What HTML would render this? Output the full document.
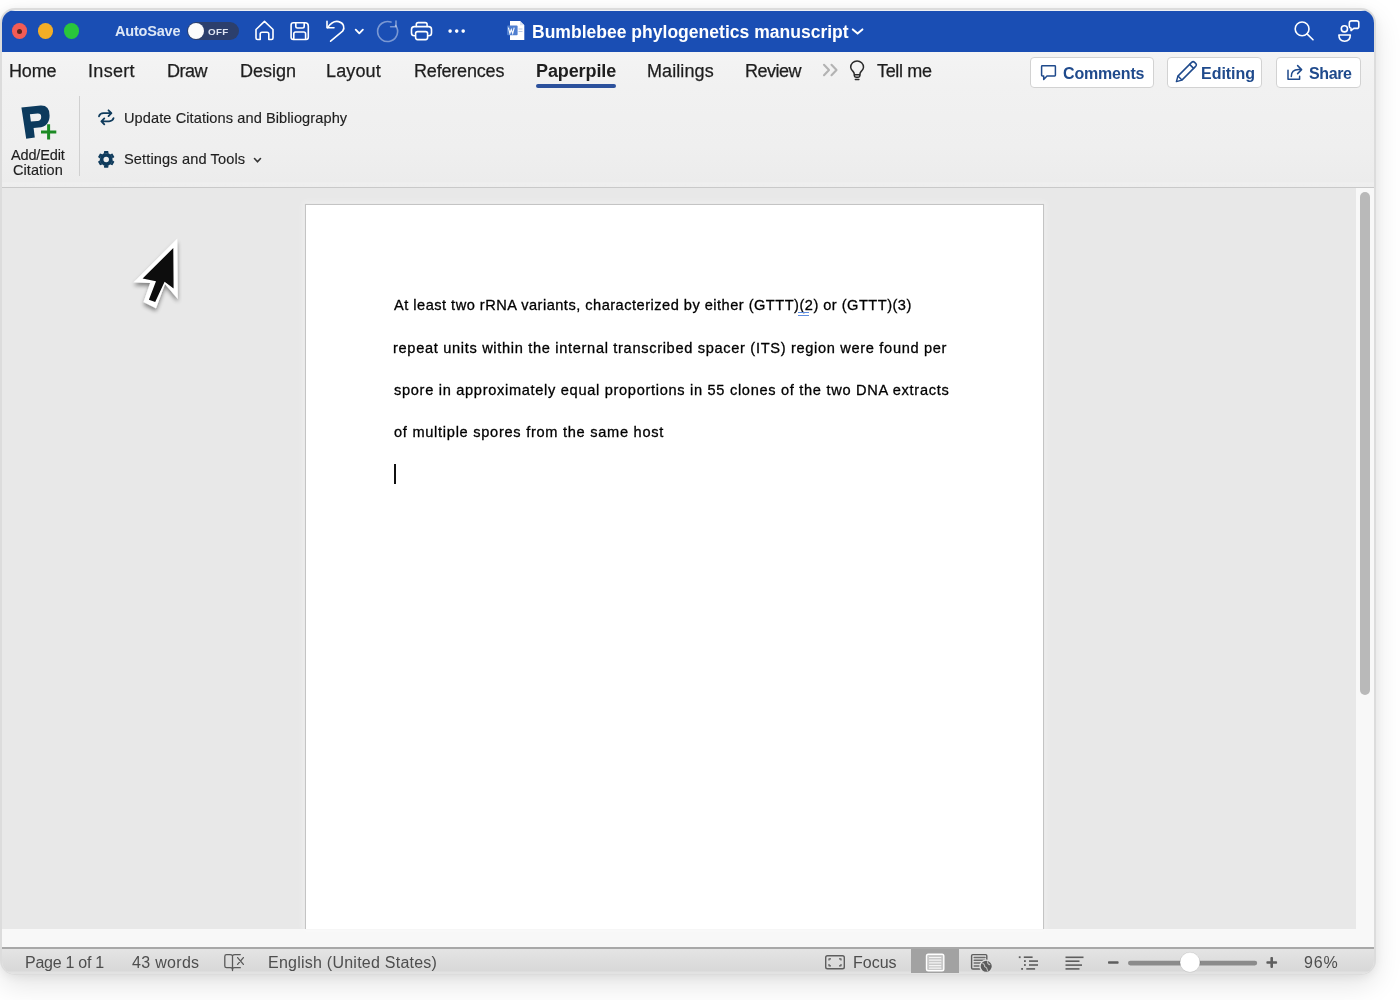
<!DOCTYPE html>
<html><head><meta charset="utf-8">
<style>
*{box-sizing:border-box;margin:0;padding:0}
html,body{width:1400px;height:1000px;overflow:hidden;background:#fff;font-family:"Liberation Sans",sans-serif}
.abs{position:absolute}
.t{position:absolute;white-space:nowrap;line-height:1;will-change:transform}
#frame{position:absolute;left:0;top:8px;width:1376px;height:967px;border-radius:15px;background:#dcdcdc;box-shadow:0 10px 28px rgba(0,0,0,.11),0 2px 10px rgba(0,0,0,.06)}
#win{position:absolute;left:2px;top:10px;width:1372px;height:964px;border-radius:13px;overflow:hidden;background:#f0f0f0}
#title{position:absolute;left:0;top:0;width:100%;height:42px;background:#1a4eb4;border-top:1px solid #eef0f4}
#ribbon{position:absolute;left:0;top:42px;width:100%;height:135px;background:linear-gradient(#f4f4f4,#f1f1f1 25%,#efefef 70%,#ececec 96%,#efefef 97%,#ededed)}
#docarea{position:absolute;left:0;top:177px;width:1354px;height:742px;background:#e8e8e8;border-top:1px solid #c9c9c9}
#vscroll{position:absolute;left:1354px;top:177px;width:18px;height:742px;background:#f8f8f8;border-top:1px solid #c9c9c9}
#hscroll{position:absolute;left:0;top:919px;width:100%;height:18px;background:#f8f8f8}
#status{position:absolute;left:0;top:937px;width:100%;height:27px;background:linear-gradient(#e4e4e4,#d8d8d8 88%,#e2e2e2 92%,#e2e2e2);border-top:2px solid #a8a8a8}
</style></head><body>
<div id="frame"></div>
<div id="win">
  <div id="title"></div>
  <div id="ribbon"></div>
  <div id="docarea"></div>
  <div id="vscroll"><div class="abs" style="left:4.2px;top:4px;width:9.8px;height:502.5px;border-radius:5px;background:#b9b9b9"></div></div>
  <div id="hscroll"></div>
  <div id="status"></div>
</div>
<div class="abs" style="left:11.75px;top:23.25px;width:15.5px;height:15.5px;border-radius:50%;background:#f35c55"></div>
<div class="abs" style="left:17px;top:28.5px;width:5px;height:5px;border-radius:50%;background:#5c261f"></div>
<div class="abs" style="left:37.75px;top:23.25px;width:15.5px;height:15.5px;border-radius:50%;background:#f4ae26"></div>
<div class="abs" style="left:63.75px;top:23.25px;width:15.5px;height:15.5px;border-radius:50%;background:#29c63b"></div>
<div class="abs" style="left:187px;top:22px;width:52px;height:18px;border-radius:9px;background:#2c3f6c"></div>
<div class="abs" style="left:187.5px;top:22.5px;width:16.5px;height:16.5px;border-radius:50%;background:#fbfbfb"></div>
<div class="t" id="t_26032449" style="left:114.50px;top:24.33px;font-size:14.5px;font-weight:bold;color:#dde7f6;letter-spacing:-0.204px;">AutoSave</div>
<div class="t" id="t_88506317" style="left:208.10px;top:27.10px;font-size:9.8px;font-weight:bold;color:#dfe6f3;letter-spacing:0.300px;">OFF</div>
<svg class="abs" style="left:0;top:0" width="1400" height="60" viewBox="0 0 1400 60" fill="none" stroke="#fff" stroke-width="1.6" stroke-linecap="round" stroke-linejoin="round">
  <path d="M256 29.5 L264.5 21.3 L273 29.5 V38 Q273 39.5 271.5 39.5 H268.8 V34 Q268.8 32.3 267 32.3 H262 Q260.2 32.3 260.2 34 V39.5 H257.5 Q256 39.5 256 38 Z"/>
  <path d="M293.5 22.8 H305 Q308.3 22.8 308.3 26 V37.3 Q308.3 39.5 306.1 39.5 H293.3 Q291.1 39.5 291.1 37.3 V25 Q291.1 22.8 293.5 22.8 Z"/>
  <path d="M295.8 23 V26.3 Q295.8 28 297.5 28 H302.5 Q304.2 28 304.2 26.3 V23"/>
  <path d="M293.8 39.3 V33.8 Q293.8 32 295.6 32 H303.8 Q305.6 32 305.6 33.8 V39.3"/>
  <path d="M327 21.2 V27.8 H334"/>
  <path d="M327.6 27.6 C 331 22.6 335 20.8 338.6 21.6 C 343.6 22.8 345.2 27.6 342.6 31.2 L330.6 41.2"/>
  <path d="M355.7 29.6 L359.3 33.4 L362.9 29.6" stroke-width="1.8"/>
  <g stroke="rgba(255,255,255,0.42)"><path d="M395.6 25.5 A 10 10 0 1 1 391 22.1"/><path d="M396 21 V26.8 H390.6"/></g>
  <path d="M416.3 26.5 V24.5 Q416.3 22.6 418.2 22.6 H425.2 Q427.1 22.6 427.1 24.5 V26.5"/>
  <path d="M415 35.8 H414.3 Q411.5 35.8 411.5 33 V29.5 Q411.5 26.6 414.4 26.6 H428.6 Q431.5 26.6 431.5 29.5 V33 Q431.5 35.8 428.7 35.8 H428"/>
  <rect x="415.6" y="31.6" width="12" height="8" rx="2" fill="#1a4eb4"/>
  <path d="M852.8 29.4 L857.6 33.6 L862.4 29.4" stroke-width="2"/>
  <circle cx="1302.1" cy="28.9" r="6.9"/>
  <path d="M1307 33.9 L1313 39.8"/>
  <circle cx="1344.4" cy="28.8" r="3.1"/>
  <path d="M1338.9 35 H1350.3 Q1350.3 41.2 1344.6 41.2 Q1338.9 41.2 1338.9 35 Z"/>
  <path d="M1351.5 20.9 H1356.8 Q1358.8 20.9 1358.8 22.9 V26.4 Q1358.8 28.4 1356.8 28.4 H1353.8 L1351 30.6 V28.2 Q1349.3 27.8 1349.3 26.2 V23.1 Q1349.3 20.9 1351.5 20.9 Z"/>
</svg>
<svg class="abs" style="left:0;top:0" width="1400" height="60" viewBox="0 0 1400 60">
  <circle cx="450.1" cy="31.1" r="1.8" fill="#fff"/><circle cx="456.7" cy="31.1" r="1.8" fill="#fff"/><circle cx="463.2" cy="31.1" r="1.8" fill="#fff"/>
  <path d="M510 21 H520 L524.3 25.3 V40 H510 Z" fill="#fff"/>
  <path d="M520 21 V25.3 H524.3" fill="#d9e2f2"/>
  <rect x="507" y="25.6" width="10.6" height="9.6" rx="1" fill="#4f7fd0"/>
  <path d="M508.4 27.6 L509.9 33.3 L511.3 29.5 L512.7 33.3 L514.2 27.6" stroke="#fff" stroke-width="1.1" fill="none"/>
  <rect x="518.5" y="28.5" width="4" height="1" fill="#b9c8e6"/><rect x="518.5" y="31" width="4" height="1" fill="#b9c8e6"/>
</svg>
<div class="t" id="t_17146103" style="left:531.50px;top:23.69px;font-size:17.5px;font-weight:bold;color:#fff;letter-spacing:0.018px;">Bumblebee phylogenetics manuscript</div>
<div class="t" id="t_84272688" style="left:8.70px;top:61.56px;font-size:18px;color:#1e1e1e;letter-spacing:-0.132px;-webkit-text-stroke:0.25px #1e1e1e;">Home</div>
<div class="t" id="t_49622823" style="left:87.80px;top:61.56px;font-size:18px;color:#1e1e1e;letter-spacing:0.320px;-webkit-text-stroke:0.25px #1e1e1e;">Insert</div>
<div class="t" id="t_42883505" style="left:167.10px;top:61.56px;font-size:18px;color:#1e1e1e;letter-spacing:-0.465px;-webkit-text-stroke:0.25px #1e1e1e;">Draw</div>
<div class="t" id="t_97843660" style="left:239.80px;top:61.56px;font-size:18px;color:#1e1e1e;-webkit-text-stroke:0.25px #1e1e1e;">Design</div>
<div class="t" id="t_3733406" style="left:326.30px;top:61.56px;font-size:18px;color:#1e1e1e;letter-spacing:0.120px;-webkit-text-stroke:0.25px #1e1e1e;">Layout</div>
<div class="t" id="t_72093144" style="left:413.80px;top:61.56px;font-size:18px;color:#1e1e1e;letter-spacing:-0.180px;-webkit-text-stroke:0.25px #1e1e1e;">References</div>
<div class="t" id="t_31691525" style="left:646.50px;top:61.56px;font-size:18px;color:#1e1e1e;letter-spacing:0.087px;-webkit-text-stroke:0.25px #1e1e1e;">Mailings</div>
<div class="t" id="t_41830489" style="left:745.00px;top:61.56px;font-size:18px;color:#1e1e1e;letter-spacing:-0.520px;-webkit-text-stroke:0.25px #1e1e1e;">Review</div>
<div class="t" id="t_50229853" style="left:876.80px;top:61.56px;font-size:18px;color:#1e1e1e;letter-spacing:-0.333px;-webkit-text-stroke:0.25px #1e1e1e;">Tell me</div>
<div class="t" id="t_70529403" style="left:536.10px;top:61.56px;font-size:18px;font-weight:bold;color:#1e1e1e;letter-spacing:-0.100px;">Paperpile</div>
<div class="abs" style="left:536px;top:84px;width:80px;height:4px;border-radius:2px;background:#2c519c"></div>
<svg class="abs" style="left:0;top:50px" width="1400" height="50" viewBox="0 50 1400 50" fill="none" stroke-linecap="round" stroke-linejoin="round">
  <path d="M824 64.8 L829 70 L824 75.2 M831.5 64.8 L836.5 70 L831.5 75.2" stroke="#b3b3b3" stroke-width="2.1"/>
  <path d="M854.3 75.6 V74.2 Q854.3 72.6 852.6 70.9 Q850.7 68.9 850.7 67.3 A6.4 6.4 0 0 1 863.5 67.3 Q863.5 68.9 861.6 70.9 Q859.9 72.6 859.9 74.2 V75.6 Q859.9 77.3 858.2 77.3 H856 Q854.3 77.3 854.3 75.6 Z" stroke="#2a2a2a" stroke-width="1.5"/>
  <path d="M854.5 74.8 H859.7 M855.3 79.5 H858.9" stroke="#2a2a2a" stroke-width="1.4"/>
</svg>
<div class="abs" style="left:1029.5px;top:57px;width:124.0px;height:31px;border-radius:4px;background:#fff;border:1px solid #d2d2d2"></div>
<div class="abs" style="left:1167px;top:57px;width:94.5px;height:31px;border-radius:4px;background:#fff;border:1px solid #d2d2d2"></div>
<div class="abs" style="left:1275.5px;top:57px;width:85.5px;height:31px;border-radius:4px;background:#fff;border:1px solid #d2d2d2"></div>
<div class="t" id="t_83634332" style="left:1063.20px;top:66.46px;font-size:16px;font-weight:bold;color:#1f4a8c;letter-spacing:-0.168px;">Comments</div>
<div class="t" id="t_40812265" style="left:1200.60px;top:66.46px;font-size:16px;font-weight:bold;color:#1f4a8c;letter-spacing:-0.031px;">Editing</div>
<div class="t" id="t_46464870" style="left:1309.20px;top:66.46px;font-size:16px;font-weight:bold;color:#1f4a8c;letter-spacing:-0.400px;">Share</div>
<svg class="abs" style="left:0;top:50px" width="1400" height="50" viewBox="0 50 1400 50" fill="none" stroke="#1f4a8c" stroke-width="1.5" stroke-linecap="round" stroke-linejoin="round">
  <path d="M1042.3 65.8 H1054.7 Q1055.4 65.8 1055.4 66.5 V75.3 Q1055.4 76 1054.7 76 H1047 L1043.7 79.5 V76 H1042.3 Q1041.6 76 1041.6 75.3 V66.5 Q1041.6 65.8 1042.3 65.8 Z"/>
  <path d="M1176.4 81.6 L1177.9 76.1 L1191.6 62.4 Q1193.1 60.9 1194.6 62.4 L1195.6 63.4 Q1197.1 64.9 1195.6 66.4 L1181.9 80.1 Z"/>
  <path d="M1178.2 76.3 L1181.7 79.8 M1189.6 64.4 L1193.6 68.4"/>
  <path d="M1288 70.3 V79.2 H1299.6 V76.2"/>
  <path d="M1291.3 76.6 Q1291.3 69.6 1298.6 69.6 H1301.4 M1297.6 65.6 L1301.6 69.6 L1297.6 73.6"/>
</svg>
<div class="t" id="t_71415620" style="left:11.00px;top:147.73px;font-size:14.5px;color:#1e1e1e;letter-spacing:-0.143px;-webkit-text-stroke:0.15px #1e1e1e;">Add/Edit</div>
<div class="t" id="t_64988780" style="left:13.00px;top:162.63px;font-size:14.5px;color:#1e1e1e;letter-spacing:0.084px;-webkit-text-stroke:0.15px #1e1e1e;">Citation</div>
<div class="abs" style="left:79px;top:96px;width:1px;height:80px;background:#d0d0d0"></div>
<div class="t" id="t_95820606" style="left:124.10px;top:111.14px;font-size:14.6px;color:#1e1e1e;letter-spacing:0.077px;-webkit-text-stroke:0.15px #1e1e1e;">Update Citations and Bibliography</div>
<div class="t" id="t_17718023" style="left:124.10px;top:152.44px;font-size:14.6px;color:#1e1e1e;letter-spacing:0.125px;-webkit-text-stroke:0.15px #1e1e1e;">Settings and Tools</div>
<svg class="abs" style="left:0;top:95px" width="400" height="95" viewBox="0 95 400 95">
  <path d="M21.4 107.4 L40.6 105.6 Q49.6 105.2 49.6 115.4 Q49.6 126.4 38.6 127.6 L33.6 128.1 L34.8 137.4 L26.2 138.8 Z M29.9 114.3 L37.6 113.6 Q41.2 113.4 41.2 116.9 Q41.2 120.6 37.4 120.9 L30.9 121.5 Z" fill="#0c3a5d" fill-rule="evenodd"/>
  <path d="M41 131.9 H56.3 M48.6 124.3 V139.6" stroke="#1c8a24" stroke-width="3"/>
  <g fill="none" stroke="#0f3b5c" stroke-width="1.8" stroke-linecap="round" stroke-linejoin="round">
    <path d="M99 116.3 Q100 113.2 103.5 113.2 H111.3 M108.5 110.3 L111.4 113.2 L108.5 116.1"/>
    <path d="M113.6 118.1 Q112.6 121.3 109.1 121.3 H101.4 M104.3 118.4 L101.4 121.3 L104.3 124.3"/>
    <path d="M254.5 158.5 L257.5 161.8 L260.5 158.5" stroke="#333" stroke-width="1.6"/>
  </g>
  <path d="M103.80 153.47 L104.20 151.10 L108.20 151.10 L108.60 153.47 A6.4 6.4 0 0 0 99.86 158.51 L98.01 156.98 L100.01 153.52 L102.26 154.36 A6.4 6.4 0 0 0 102.26 164.44 L100.01 165.28 L98.01 161.82 L99.86 160.29 A6.4 6.4 0 0 0 108.60 165.33 L108.20 167.70 L104.20 167.70 L103.80 165.33 A6.4 6.4 0 0 0 112.54 160.29 L114.39 161.82 L112.39 165.28 L110.14 164.44 A6.4 6.4 0 0 0 110.14 154.36 L112.39 153.52 L114.39 156.98 L112.54 158.51 A6.4 6.4 0 0 0 103.80 153.47 Z M106.2 156.7 A2.75 2.75 0 1 0 106.2 162.2 A2.75 2.75 0 1 0 106.2 156.7 Z" fill="#0f3b5c" fill-rule="evenodd"/>
</svg>
<div class="abs" style="left:305px;top:204px;width:739px;height:725px;background:#fff;border:1px solid #c4c4c4;border-bottom:none;box-shadow:0 0 1px rgba(0,0,0,.08),0 0 6px 2px rgba(255,255,255,.35)"></div>
<div class="t" id="t_59730513" style="left:394.30px;top:298.24px;font-size:14.6px;color:#000;letter-spacing:0.488px;-webkit-text-stroke:0.3px #000;">At least two rRNA variants, characterized by either (GTTT)(2) or (GTTT)(3)</div>
<div class="t" id="t_63305617" style="left:393.40px;top:340.84px;font-size:14.6px;color:#000;letter-spacing:0.679px;-webkit-text-stroke:0.3px #000;">repeat units within the internal transcribed spacer (ITS) region were found per</div>
<div class="t" id="t_8577217" style="left:394.30px;top:382.74px;font-size:14.6px;color:#000;letter-spacing:0.692px;-webkit-text-stroke:0.3px #000;">spore in approximately equal proportions in 55 clones of the two DNA extracts</div>
<div class="t" id="t_11297310" style="left:394.30px;top:425.34px;font-size:14.6px;color:#000;letter-spacing:0.722px;-webkit-text-stroke:0.3px #000;">of multiple spores from the same host</div>
<div class="abs" style="left:797.5px;top:312px;width:11.5px;height:3.5px;border-top:1.2px solid #5f8ee0;border-bottom:1.2px solid #5f8ee0"></div>
<div class="abs" style="left:394px;top:464px;width:1.6px;height:19.5px;background:#111"></div>
<svg class="abs" style="left:120px;top:225px" width="80" height="100" viewBox="120 225 80 100">
  <defs><filter id="sh" x="-50%" y="-50%" width="200%" height="200%"><feGaussianBlur in="SourceAlpha" stdDeviation="2.2"/><feOffset dx="0" dy="2.5"/><feComponentTransfer><feFuncA type="linear" slope="0.45"/></feComponentTransfer><feMerge><feMergeNode/><feMergeNode in="SourceGraphic"/></feMerge></filter></defs>
  <g filter="url(#sh)">
  <path d="M177.3 238.6 L177.8 298.9 L165 284 L156 308.3 L143.5 302 L150.2 283.1 L133.6 282.2 Z" fill="#fff"/>
  </g>
  <path d="M173.3 248 L173.6 288.5 L164.6 281.8 L155.2 302 L148.9 299.8 L156 281.3 L142.6 278.6 Z" fill="#0d0d0d"/>
</svg>
<div class="t" id="t_20716267" style="left:25.30px;top:955.46px;font-size:16px;color:#4e4e4e;letter-spacing:-0.270px;">Page 1 of 1</div>
<div class="t" id="t_37225579" style="left:131.80px;top:955.46px;font-size:16px;color:#4e4e4e;letter-spacing:0.311px;">43 words</div>
<div class="t" id="t_17611000" style="left:267.90px;top:955.46px;font-size:16px;color:#4e4e4e;letter-spacing:0.241px;">English (United States)</div>
<div class="t" id="t_59652253" style="left:852.70px;top:955.46px;font-size:16px;color:#4e4e4e;">Focus</div>
<div class="t" id="t_34278071" style="left:1304.10px;top:955.46px;font-size:16px;color:#4e4e4e;letter-spacing:0.900px;">96%</div>
<div class="abs" style="left:911px;top:948.5px;width:47.5px;height:24.5px;background:#a2a2a2"></div>
<svg class="abs" style="left:0;top:940px" width="1400" height="40" viewBox="0 940 1400 40" fill="none" stroke-linecap="round" stroke-linejoin="round">
  <g stroke="#5a5a5a" stroke-width="1.3">
    <path d="M232.5 955.6 Q231.7 954.6 230 954.6 H226.6 Q224.8 954.6 224.8 956.4 V965.9 Q224.8 967.7 226.6 967.7 H230.5 Q232.5 967.7 232.5 969.7 V970.6 M232.5 969.7 Q232.5 967.7 234.5 967.7 H240.3 M232.5 955.6 V969.7 M232.5 955.6 Q233.3 954.6 235 954.6 H240.3"/>
    <path d="M237.6 957.6 L243.4 964.4 M243.4 957.6 L237.6 964.4"/>
  </g>
  <rect x="825.7" y="955.7" width="18.6" height="13" rx="1.8" stroke="#5e5e5e" stroke-width="1.4"/>
  <path d="M829 960.5 V958.8 H831 M839 958.8 H841 V960.5 M841 964 V965.8 H839 M831 965.8 H829 V964" stroke="#5e5e5e" stroke-width="1.2" stroke-linecap="butt"/>
  <rect x="926.5" y="954.3" width="17.3" height="16.4" rx="1.8" fill="#c9c9c9" stroke="#fff" stroke-width="1.4"/>
  <path d="M929.5 957.5 H940.8 M929.5 960.2 H940.8 M929.5 962.9 H940.8 M929.5 965.6 H940.8 M929.5 968.2 H940.8" stroke="#f4f4f4" stroke-width="1.2"/>
  <rect x="971.6" y="954.6" width="15.2" height="14.4" rx="1.2" stroke="#5e5e5e" stroke-width="1.4"/>
  <path d="M974.2 957.5 H985 M974.2 960.3 H985 M974.2 963.1 H982 M974.2 965.9 H981" stroke="#6c6c6c" stroke-width="1.5"/>
  <circle cx="986.2" cy="966.3" r="6.2" fill="#5c5c5c" stroke="#dedede" stroke-width="1.3"/>
  <path d="M982.8 963.5 Q985 964.3 984.6 966.6 Q987 967.5 987.6 970.6 M987.6 961.6 Q987.2 964 989.8 964.6" stroke="#bdbdbd" stroke-width="1.1"/>
  <g fill="#5e5e5e">
    <rect x="1018.8" y="956.3" width="1.8" height="1.8"/><rect x="1023.8" y="956.4" width="8.8" height="1.6"/>
    <rect x="1024" y="960.2" width="1.8" height="1.8"/><rect x="1029" y="960.3" width="9" height="1.6"/>
    <rect x="1024" y="964.1" width="1.8" height="1.8"/><rect x="1029" y="964.2" width="9" height="1.6"/>
    <rect x="1021.2" y="968" width="1.8" height="1.8"/><rect x="1026.3" y="968.1" width="8.8" height="1.6"/>
    <rect x="1065.5" y="956.5" width="18" height="1.6"/><rect x="1065.5" y="960.4" width="14" height="1.6"/>
    <rect x="1065.5" y="964.3" width="16.5" height="1.6"/><rect x="1065.5" y="968.1" width="14" height="1.6"/>
    <rect x="1108" y="961.2" width="10.6" height="2.6" rx="0.8"/>
    <rect x="1266.4" y="961.2" width="10.7" height="2.6" rx="0.8"/><rect x="1270.4" y="957.1" width="2.6" height="10.8" rx="0.8"/>
  </g>
  <rect x="1128" y="960.7" width="129.2" height="4.8" rx="2.4" fill="#8b8b8b"/>
  <circle cx="1190" cy="962.3" r="10" fill="#fff" stroke="rgba(0,0,0,0.12)" stroke-width="0.8"/>
</svg>
</body></html>
